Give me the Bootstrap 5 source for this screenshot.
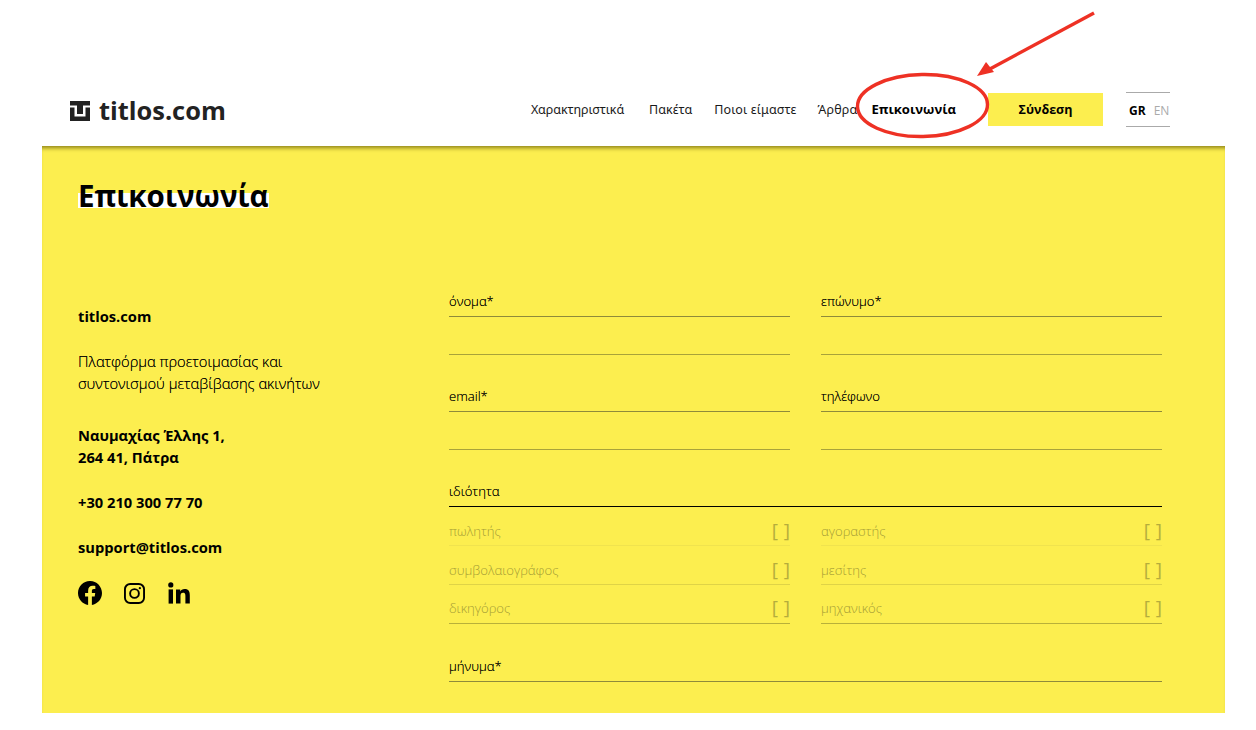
<!DOCTYPE html>
<html lang="el">
<head>
<meta charset="utf-8">
<title>Επικοινωνία</title>
<link rel="stylesheet" href="https://cdn.jsdelivr.net/npm/bootstrap@5.3.0/dist/css/bootstrap.min.css">
<style>
html,body{height:730px;overflow:hidden;background:#fff}
body{font-family:"Open Sans","Noto Sans",sans-serif;color:#000;position:relative}
.page-top{padding:92px 86px 0 70px;height:146px}
.head-row{height:35px}
.logo-word{font-family:"Open Sans",sans-serif;font-weight:700;font-size:25.4px;color:#222;line-height:1;margin-top:2px}
.logo-mark{width:20px;height:20px;margin-top:2px}
.logo-gap{gap:9px}
.nav-link-x{font-size:12.5px;font-weight:400;color:#1a1a1a;text-decoration:none;white-space:nowrap;font-family:"Noto Sans",sans-serif;padding-top:2px}
.sp-a{letter-spacing:-.1px}
.sp-b{letter-spacing:.15px}
.m1{margin-left:25px}.m2{margin-left:22px}.m3{margin-left:21px}.m4{margin-left:14px}
.nav-link-x.nav-strong{font-family:"Open Sans",sans-serif;font-weight:700;color:#000;font-size:13.1px;padding-top:0}
.login-btn{background:#fcee4f;color:#000;font-weight:700;font-size:12.5px;width:115px;height:33px;margin-left:32px;border:0;border-radius:0;padding:2px 0 0}
.lang-box{width:44px;height:35px;margin-left:23px;border-top:1px solid #aaa;border-bottom:1px solid #aaa;font-size:12px;padding-left:3px;padding-top:3px}
.lang-on{font-weight:700}
.lang-off{color:#aaa;margin-left:8px}
.panel-y{margin-left:42px;width:1183px;height:567px;background:#fcee4f;padding:0 63px 0 36px;box-shadow:inset 0 5px 4px -3px rgba(90,80,0,.7)}
.panel-title{font-size:29.5px;font-weight:700;line-height:38px;margin:0;padding-top:31px;height:117px}
.title-band{background:linear-gradient(transparent 45%,#fff 45%,#fff 81%,transparent 81%)}
.layout-grid{display:grid;grid-template-columns:371px 1fr}
.info-col{padding-top:42px;font-size:14.7px;line-height:22px}
.info-col p{margin:0}
.info-name{font-weight:700;margin-bottom:23px!important}
.info-desc{font-weight:300;margin-bottom:30px!important;text-shadow:0 0 .4px rgba(0,0,0,.7)}
.info-b{font-weight:700;margin-bottom:23px!important}
.social{gap:22px}
.social-in{margin-left:1px}
.form-col{padding-top:28px}
.two-grid{display:grid;grid-template-columns:341px 341px;column-gap:31px}
.fld-label{display:block;font-size:13.1px;font-weight:300;line-height:20px;height:26px;border-bottom:1px solid #8f8a3a;margin:0;color:#000;text-shadow:0 0 .4px rgba(0,0,0,.7)}
.fld-input{display:block;width:100%;height:38px;background:transparent;border:0;border-bottom:1px solid #a8a23a;border-radius:0;padding:0;outline:0}
.fld{margin-bottom:31px}
.role-head{font-size:13.1px;font-weight:300;line-height:20px;height:27px;border-bottom:1px solid #000;padding-top:1px;margin-top:-1px;text-shadow:0 0 .4px rgba(0,0,0,.7)}
.role-row{display:flex;justify-content:space-between;align-items:center;height:39px;padding-top:12px;font-size:13.1px;font-weight:300;color:#a59d36}
.role-row .brk{font-size:19px;font-weight:400;color:#b5ad3c;line-height:20px;word-spacing:1px;margin-top:-4px}
.r1{border-bottom:1px solid #f0e34e}
.r2{border-bottom:1px solid #dfd347}
.role-row.r3{border-bottom:1px solid #b8b03a;padding-top:10px}
.msg{font-size:13.1px;font-weight:300;line-height:20px;height:27px;border-bottom:1px solid #8f8a3a;margin-top:31px;padding-top:1px;text-shadow:0 0 .4px rgba(0,0,0,.7)}
.annot{position:absolute;left:0;top:0;pointer-events:none}
</style>
</head>
<body>
<header class="page-top">
  <div class="d-flex align-items-center head-row">
    <a href="#" class="d-flex align-items-center logo-gap text-decoration-none">
      <svg class="logo-mark" viewBox="0 0 20 20" fill="#222"><path d="M0 0h20v4.500h-7v8.500H7V4.500H0z"/><path d="M0 6.500h4.500v9h11v-9H20V20H0z"/></svg>
      <span class="logo-word">titlos.com</span>
    </a>
    <nav class="d-flex align-items-center ms-auto">
      <a class="nav-link-x sp-a" href="#">Χαρακτηριστικά</a>
      <a class="nav-link-x m1" href="#">Πακέτα</a>
      <a class="nav-link-x sp-b m2" href="#">Ποιοι είμαστε</a>
      <a class="nav-link-x sp-b m3" href="#">Άρθρα</a>
      <a class="nav-link-x nav-strong m4" href="#">Επικοινωνία</a>
      <button class="btn login-btn" type="button">Σύνδεση</button>
      <div class="lang-box d-flex align-items-center"><span class="lang-on">GR</span><span class="lang-off">EN</span></div>
    </nav>
  </div>
</header>
<main class="panel-y">
  <h1 class="panel-title"><span class="title-band">Επικοινωνία</span></h1>
  <div class="layout-grid">
    <aside class="info-col">
      <p class="info-name">titlos.com</p>
      <p class="info-desc">Πλατφόρμα προετοιμασίας και<br>συντονισμού μεταβίβασης ακινήτων</p>
      <p class="info-b">Ναυμαχίας Έλλης 1,<br>264 41, Πάτρα</p>
      <p class="info-b">+30 210 300 77 70</p>
      <p class="info-b">support@titlos.com</p>
      <div class="d-flex align-items-center social">
        <svg width="24" height="24" viewBox="0 0 16 16"><path d="M16 8.049c0-4.446-3.582-8.05-8-8.05C3.58 0-.002 3.603-.002 8.05c0 4.017 2.926 7.347 6.75 7.951v-5.625h-2.03V8.05H6.75V6.275c0-2.017 1.195-3.131 3.022-3.131.876 0 1.791.157 1.791.157v1.98h-1.009c-.993 0-1.303.621-1.303 1.258v1.51h2.218l-.354 2.326H9.25V16c3.824-.604 6.75-3.934 6.75-7.951z"/></svg>
        <svg width="21" height="21" viewBox="0 0 22 22" fill="none" stroke="#000" stroke-width="2"><rect x="1" y="1" width="20" height="20" rx="5.500"/><circle cx="11" cy="11" r="4.600"/><circle cx="16.600" cy="5.400" r="1.200" fill="#000" stroke="none"/></svg>
        <svg class="social-in" width="22" height="22" viewBox="0 0 22 22"><circle cx="2.800" cy="2.900" r="2.600"/><rect x=".6" y="7.400" width="4.400" height="14.200"/><path d="M8 7.400h4.200v2c.7-1.200 2.200-2.400 4.400-2.400 4.200 0 5.200 2.700 5.200 6.400v8.200h-4.400v-7.300c0-1.700 0-3.600-2.300-3.600s-2.600 1.700-2.600 3.500v7.400H8z"/></svg>
      </div>
    </aside>
    <form class="form-col">
      <div class="two-grid">
        <div class="fld"><label class="fld-label">όνομα*</label><input class="fld-input" type="text" aria-label="όνομα"></div>
        <div class="fld"><label class="fld-label">επώνυμο*</label><input class="fld-input" type="text" aria-label="επώνυμο"></div>
        <div class="fld"><label class="fld-label">email*</label><input class="fld-input" type="text" aria-label="email"></div>
        <div class="fld"><label class="fld-label">τηλέφωνο</label><input class="fld-input" type="text" aria-label="τηλέφωνο"></div>
      </div>
      <div class="role-head">ιδιότητα</div>
      <div class="two-grid">
        <div class="role-row r1"><span>πωλητής</span><span class="brk">[ ]</span></div>
        <div class="role-row r1"><span>αγοραστής</span><span class="brk">[ ]</span></div>
        <div class="role-row r2"><span>συμβολαιογράφος</span><span class="brk">[ ]</span></div>
        <div class="role-row r2"><span>μεσίτης</span><span class="brk">[ ]</span></div>
        <div class="role-row r3"><span>δικηγόρος</span><span class="brk">[ ]</span></div>
        <div class="role-row r3"><span>μηχανικός</span><span class="brk">[ ]</span></div>
      </div>
      <div class="msg">μήνυμα*</div>
    </form>
  </div>
</main>
<svg class="annot" width="1256" height="730" viewBox="0 0 1256 730" fill="none">
  <ellipse cx="922.500" cy="105.500" rx="65" ry="31" stroke="#ee3124" stroke-width="3.400" transform="rotate(-1 922.500 105.500)"/>
  <path d="M1094 13 L988 70" stroke="#ee3124" stroke-width="3.400"/>
  <path d="M977 76 L986 62 L994 72 Z" fill="#ee3124"/>
</svg>
</body>
</html>
